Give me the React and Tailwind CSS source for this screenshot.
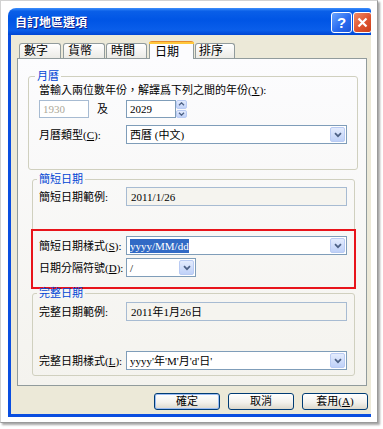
import React from "react";

function Chevron() {
  return (
    <svg width="8" height="6" viewBox="0 0 8 6">
      <path d="M1 1.2 L4 4.2 L7 1.2" fill="none" stroke="#4d6185" strokeWidth="1.7" />
    </svg>
  );
}

function DropBtn() {
  return (
    <div className="w-[15px] m-px rounded-[2px] border border-[#b9cbf3] bg-[linear-gradient(to_bottom,#e4ecfd,#bfd1f8)] flex items-center justify-center">
      <Chevron />
    </div>
  );
}

function Select({ w, children }) {
  return (
    <div className={`${w} h-[19px] border border-[#7f9db9] bg-white flex items-stretch`}>
      <div className="flex-1 flex items-center pl-[3px] whitespace-nowrap overflow-hidden">{children}</div>
      <DropBtn />
    </div>
  );
}

function ReadOnly({ children }) {
  return (
    <div className="w-[221px] h-[19px] border border-[#a7bbd2] bg-[#f5f4ef] flex items-center pl-[4px] whitespace-nowrap">
      {children}
    </div>
  );
}

function Row({ label, className, children }) {
  return (
    <div className={`flex items-center ${className}`}>
      <div className="w-[87px] shrink-0 whitespace-nowrap">{label}</div>
      {children}
    </div>
  );
}

function Group({ title, className, legendClass, children }) {
  return (
    <fieldset className={`border border-[#d0d0bf] rounded-[3px] p-0 m-0 min-w-0 ${className}`}>
      <legend className={`px-[2px] text-[#0046d5] leading-[14px] ${legendClass}`}>{title}</legend>
      {children}
    </fieldset>
  );
}

function Tab({ className, children }) {
  return (
    <div
      className={`h-[15px] border border-b-0 border-[#919b9c] rounded-t-[3px] bg-[linear-gradient(to_bottom,#ffffff,#ecebe6)] flex items-center pl-[3px] text-[12px] leading-none ${className}`}
    >
      {children}
    </div>
  );
}

function Button({ def, children }) {
  return (
    <div
      className={`w-[66px] h-[17px] rounded-[3px] border border-[#003c74] bg-[linear-gradient(to_bottom,#ffffff,#f3f2ed_55%,#dcd8cc)] flex items-center justify-center leading-none ${
        def ? "shadow-[inset_0_0_0_1px_#9bbcf3]" : ""
      }`}
    >
      {children}
    </div>
  );
}

export default function App() {
  return (
    <div className="w-[383px] h-[429px] bg-white font-['Liberation_Serif','Noto_Sans_CJK_TC',serif] text-[11px] leading-[14px] text-black">
      <div className="w-[378px] h-[423px] border border-[#d2d2d2] border-r-[#9a9a9a] border-b-[#9a9a9a] bg-white shadow-[2px_2px_2px_rgba(0,0,0,0.35)] pl-[7px] pt-[7px]">
        <div className="w-[363px] h-[409px] flex flex-col overflow-hidden">
          {/* Title bar */}
          <div className="h-[27px] shrink-0 rounded-tl-[8px] rounded-tr-[3px] bg-[linear-gradient(to_bottom,#3d8ffc_0%,#0a5fe8_12%,#0055e5_45%,#0a5eea_82%,#0046d3_100%)] flex items-center pl-[7px]">
            <span className="font-['Noto_Sans_CJK_TC',sans-serif] font-bold text-[12px] leading-none text-white [text-shadow:1px_1px_0_#0a1b8a]">
              自訂地區選項
            </span>
            <div className="ml-auto flex gap-px -mr-px mt-[2px]">
              <div className="w-[21px] h-[21px] rounded-[3px] border border-white bg-[linear-gradient(135deg,#6aa5ff,#2a6cf0_55%,#1b54d8)] flex items-center justify-center text-white font-bold text-[15px] leading-none font-['Liberation_Sans',sans-serif]">
                ?
              </div>
              <div className="w-[19px] h-[21px] rounded-[3px] border border-white bg-[linear-gradient(135deg,#f08a66,#de5430_55%,#c93f1b)] flex items-center justify-center">
                <svg width="11" height="11" viewBox="0 0 11 11">
                  <path d="M1.5 1.5 L9.5 9.5 M9.5 1.5 L1.5 9.5" stroke="#ffffff" strokeWidth="2.2" />
                </svg>
              </div>
            </div>
          </div>

          {/* Body */}
          <div className="flex-1 bg-[#ece9d8] border-l-[3px] border-b-[3px] border-[#0a4ee0] pl-[6px] pt-[6px] flex flex-col">
            {/* Tabs */}
            <div className="h-[17px] flex items-end pl-[2px] relative z-10">
              <Tab className="w-[42px] pl-[4px]">數字</Tab>
              <Tab className="w-[42px] ml-[2px] pl-[4px]">貨幣</Tab>
              <Tab className="w-[41px] ml-px pl-[4px]">時間</Tab>
              <div className="w-[45px] h-[18px] -mb-px ml-[2px] rounded-t-[3px] border border-b-0 border-[#919b9c] border-t-[#e68b2c] bg-[#fcfcfe] flex flex-col text-[12px] leading-none">
                <div className="h-[2px] bg-[#ffc83c] -mx-px"></div>
                <div className="flex-1 flex items-center pl-[5px]">日期</div>
              </div>
              <Tab className="w-[40px] ml-px pl-[3px]">排序</Tab>
            </div>

            {/* Panel */}
            <div className="w-[350px] h-[328px] shrink-0 border border-[#919b9c] bg-[linear-gradient(to_bottom,#fcfcfe,#f4f3ee)] flex flex-col items-start">
              <Group title="月曆" className="ml-[10px] mt-[10px] w-[330px] h-[101px]" legendClass="ml-[6px]">
                <div className="pl-[10px] flex flex-col">
                  <div className="h-[14px] whitespace-nowrap">
                    當輸入兩位數年份，解譯爲下列之間的年份(<u>Y</u>):
                  </div>
                  <div className="mt-[3px] h-[18px] flex items-center">
                    <div className="w-[50px] h-[18px] border border-[#a7bbd2] bg-white flex items-center pl-[3px] text-[#aca899]">
                      1930
                    </div>
                    <span className="ml-[8px]">及</span>
                    <div className="ml-[18px] w-[50px] h-[18px] border border-[#7f9db9] bg-white flex items-center pl-[3px]">
                      2029
                    </div>
                    <div className="w-[11px] h-[18px] flex flex-col gap-px">
                      <div className="flex-1 rounded-[2px] border border-[#b9cbf3] bg-[linear-gradient(to_bottom,#e4ecfd,#bfd1f8)] flex items-center justify-center">
                        <svg width="7" height="4" viewBox="0 0 7 4">
                          <path d="M1 3.2 L3.5 0.8 L6 3.2" fill="none" stroke="#4d6185" strokeWidth="1.3" />
                        </svg>
                      </div>
                      <div className="flex-1 rounded-[2px] border border-[#b9cbf3] bg-[linear-gradient(to_bottom,#e4ecfd,#bfd1f8)] flex items-center justify-center">
                        <svg width="7" height="4" viewBox="0 0 7 4">
                          <path d="M1 0.8 L3.5 3.2 L6 0.8" fill="none" stroke="#4d6185" strokeWidth="1.3" />
                        </svg>
                      </div>
                    </div>
                  </div>
                  <Row className="mt-[7px]" label={<>月曆類型(<u>C</u>):</>}>
                    <Select w="w-[221px]">西曆 (中文)</Select>
                  </Row>
                </div>
              </Group>

              <Group title="簡短日期" className="ml-[14px] mt-[2px] w-[323px] h-[117px]" legendClass="ml-[4px]">
                <div className="pl-[6px] flex flex-col">
                  <Row className="mt-px" label="簡短日期範例:">
                    <ReadOnly>2011/1/26</ReadOnly>
                  </Row>
                  <div className="mt-[23px] -ml-[8px] w-[325px] h-[60px] border-2 border-[#e8141b] pl-[6px] pt-[5px] flex flex-col">
                    <Row label={<>簡短日期樣式(<u>S</u>):</>}>
                      <Select w="w-[221px]">
                        <span className="bg-[#316ac5] text-white">yyyy/MM/dd</span>
                      </Select>
                    </Row>
                    <Row className="mt-[3px]" label={<>日期分隔符號(<u>D</u>):</>}>
                      <Select w="w-[70px]">/</Select>
                    </Row>
                  </div>
                </div>
              </Group>

              <Group title="完整日期" className="ml-[14px] -mt-[3px] w-[323px] h-[90px]" legendClass="ml-[4px]">
                <div className="pl-[6px] flex flex-col">
                  <Row className="mt-[2px]" label="完整日期範例:">
                    <ReadOnly>2011年1月26日</ReadOnly>
                  </Row>
                  <Row className="mt-[30px]" label={<>完整日期樣式(<u>L</u>):</>}>
                    <Select w="w-[221px]">yyyy&apos;年&apos;M&apos;月&apos;d&apos;日&apos;</Select>
                  </Row>
                </div>
              </Group>
            </div>

            {/* Buttons */}
            <div className="mt-[7px] flex justify-end gap-[8px] pr-[3px]">
              <Button def>確定</Button>
              <Button>取消</Button>
              <Button>
                套用(<u>A</u>)
              </Button>
            </div>
          </div>
        </div>
      </div>
    </div>
  );
}
